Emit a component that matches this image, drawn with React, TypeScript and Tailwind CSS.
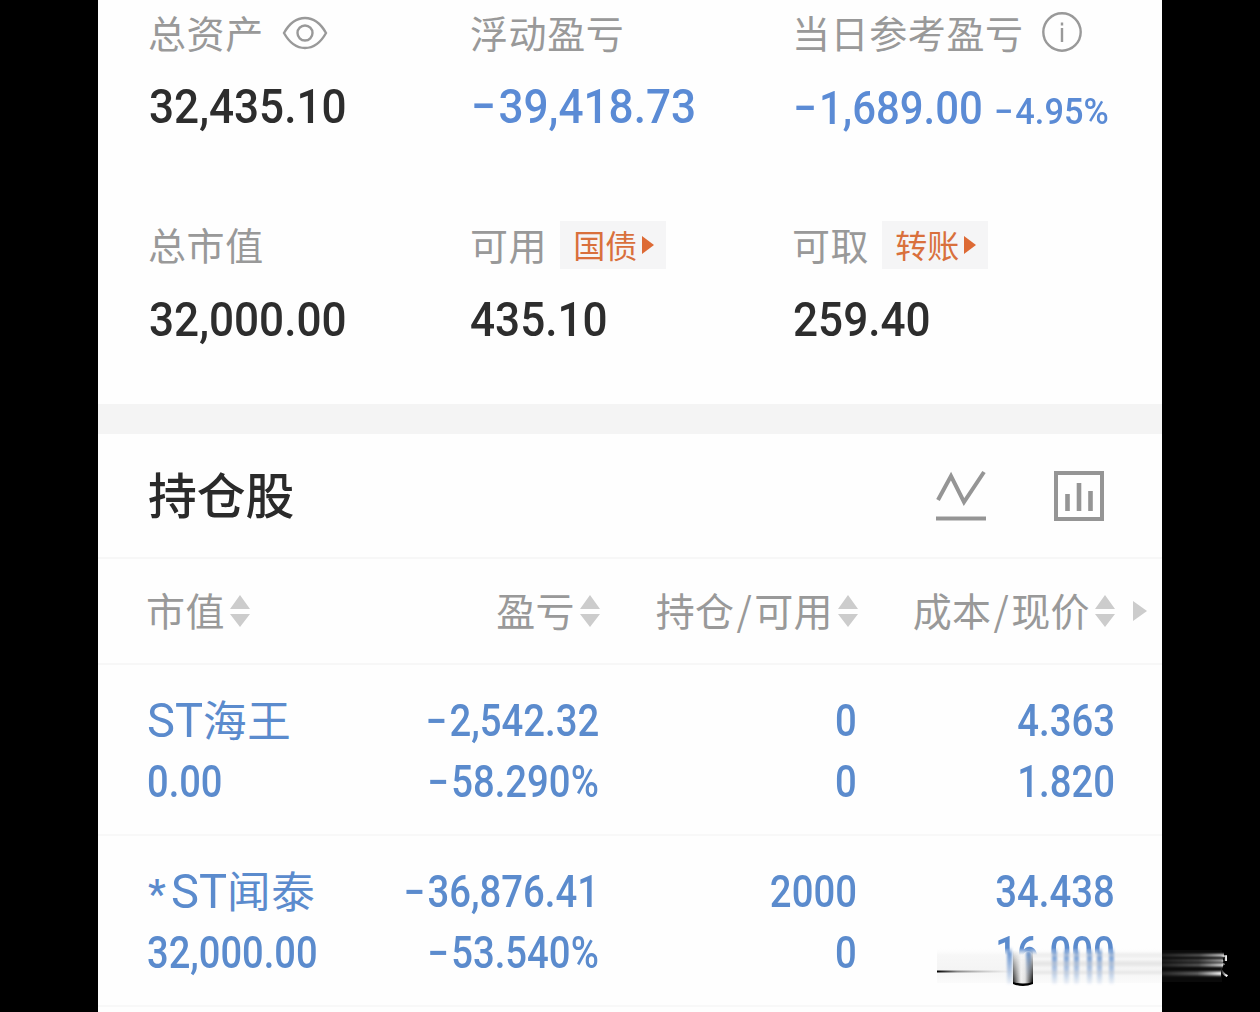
import { clsx } from 'clsx'

interface Holding {
  name: string
  starred?: boolean
  marketValue: string
  pnl: string
  pnlPercent: string
  position: string
  available: string
  cost: string
  price: string
}

const holdings: Holding[] = [
  {
    name: '海王',
    marketValue: '0.00',
    pnl: '−2,542.32',
    pnlPercent: '−58.290%',
    position: '0',
    available: '0',
    cost: '4.363',
    price: '1.820',
  },
  {
    name: '闻泰',
    starred: true,
    marketValue: '32,000.00',
    pnl: '−36,876.41',
    pnlPercent: '−53.540%',
    position: '2000',
    available: '0',
    cost: '34.438',
    price: '16.000',
  },
]

// Narrow digits, squeezed towards the side they are aligned to
function Num({ children, className }: { children: string; className?: string }) {
  const negative = children.startsWith('−')
  return (
    <span className={clsx("inline-block whitespace-nowrap font-['Roboto',sans-serif] font-medium", className)}>
      {negative && <span className="mr-[0.06em]">−</span>}
      {negative ? children.slice(1) : children}
    </span>
  )
}

function Label({ children }: { children: string }) {
  return <span className="-mt-[3px] -ml-px text-[38px] leading-none tracking-[0.6px] text-[#999]">{children}</span>
}

function Tag({ children }: { children: string }) {
  return (
    <span className="ml-[13px] flex h-12 w-[106px] items-center bg-[#f5f5f6] pl-[13px] text-[32px] leading-none text-[#d9703c]">
      <span className="-mt-[3px]">{children}</span>
      <svg viewBox="0 0 12 18" className="ml-[5px] h-[18px] w-3 fill-[#dd6a35]">
        <path d="M0 0L12 9L0 18Z" />
      </svg>
    </span>
  )
}

function EyeIcon() {
  return (
    <svg viewBox="0 0 46 34" className="ml-[18px] h-[34px] w-[46px] fill-none stroke-[#999] stroke-[2.4]">
      <path d="M2 17C7 8 14 2 23 2C32 2 39 8 44 17C39 26 32 32 23 32C14 32 7 26 2 17Z" />
      <circle cx="23" cy="17" r="7.5" />
    </svg>
  )
}

function InfoIcon() {
  return (
    <svg viewBox="0 0 42 42" className="-mt-[2px] ml-[17px] h-[42px] w-[42px] fill-none stroke-[#999] stroke-[2.4]">
      <circle cx="21" cy="21" r="18.7" />
      <path d="M21 17V31M21 11.5V14.5" />
    </svg>
  )
}

function SortIcon() {
  return (
    <svg viewBox="0 0 20 32" className="ml-[5px] h-8 w-5 shrink-0 fill-[#ccc]">
      <path d="M10 0L20 14H0ZM0 19H20L10 32Z" />
    </svg>
  )
}

function LineChartIcon() {
  return (
    <svg viewBox="0 0 50 52" className="h-[52px] w-[50px] fill-none stroke-[#959595] stroke-[4]">
      <path d="M2 30L15 6L28 32L48 2M0 48.5H50" />
    </svg>
  )
}

function BarChartIcon() {
  return (
    <svg viewBox="0 0 50 50" className="h-[50px] w-[50px] fill-none stroke-[#959595] stroke-[4]">
      <path d="M2 2H48V48H2Z" />
      <path d="M13.5 23V40M25 12V40M36.5 20V40" className="stroke-[4.6]" />
    </svg>
  )
}

function HeaderCell({ children, className }: { children: string; className?: string }) {
  const [first, second] = children.split('/')
  return (
    <div className={clsx('flex items-center text-[39px] leading-none text-[#999]', className)}>
      <span className="-mt-1 whitespace-nowrap tracking-[0.4px]">
        {first}
        {second && <span className="mx-[2px]">/</span>}
        {second}
      </span>
      <SortIcon />
    </div>
  )
}

function Pair({ top, bottom }: { top: string; bottom: string }) {
  return (
    <div className="flex flex-col items-end pt-[2px] text-[43.5px] leading-[61px]">
      <Num className="origin-right scale-x-[0.88]">{top}</Num>
      <Num className="origin-right scale-x-[0.88]">{bottom}</Num>
    </div>
  )
}

function HoldingRow({ item }: { item: Holding }) {
  return (
    <div className="grid h-[171px] grid-cols-[200px_252px_258px_258px] border-b-2 border-[#f8f8f8] pt-6 pl-[49px] text-[#5b8bcd]">
      <div className="flex flex-col items-start text-[43.5px] leading-[61px]">
        <div className="-mt-px flex h-[64px] items-center whitespace-nowrap">
          {item.starred && (
            <span className="w-[24px] translate-x-px translate-y-[3px] font-['Roboto',sans-serif] text-[40px] font-medium">
              *
            </span>
          )}
          <span className="w-[56px] origin-left scale-x-[0.98] font-['Roboto',sans-serif] text-[48px]">ST</span>
          <span className="-mt-[3px] tracking-[0.8px]">{item.name}</span>
        </div>
        <Num className="origin-left scale-x-[0.875]">{item.marketValue}</Num>
      </div>
      <Pair top={item.pnl} bottom={item.pnlPercent} />
      <Pair top={item.position} bottom={item.available} />
      <Pair top={item.cost} bottom={item.price} />
    </div>
  )
}

// Smeared strip in the lower right corner, running over the last price and the margin
function Smear() {
  return (
    <div className="absolute top-[935px] left-[930px] h-[60px] w-[305px]">
      <svg viewBox="930 935 305 60" className="h-full w-full">
        <defs>
          <linearGradient id="cover" x1="0" y1="0" x2="0" y2="1">
            <stop offset="0" stopColor="#fdfdfd" stopOpacity="0" />
            <stop offset="0.2" stopColor="#f7f7f7" />
            <stop offset="0.6" stopColor="#f4f4f4" />
            <stop offset="1" stopColor="#fbfbfb" />
          </linearGradient>
          <linearGradient id="stem" gradientUnits="userSpaceOnUse" x1="0" y1="947" x2="0" y2="984">
            <stop offset="0" stopColor="#5b8bcd" stopOpacity="0" />
            <stop offset="0.18" stopColor="#5b8bcd" stopOpacity="0.85" />
            <stop offset="1" stopColor="#5b8bcd" stopOpacity="0.08" />
          </linearGradient>
          <linearGradient id="cup" x1="0" y1="0" x2="1" y2="0">
            <stop offset="0" stopColor="#222" />
            <stop offset="0.4" stopColor="#eee" stopOpacity="0.9" />
            <stop offset="0.6" stopColor="#ddd" stopOpacity="0.9" />
            <stop offset="1" stopColor="#000" />
          </linearGradient>
          <linearGradient id="cupFade" x1="0" y1="0" x2="0" y2="1">
            <stop offset="0.05" stopColor="#fff" stopOpacity="0" />
            <stop offset="0.85" stopColor="#fff" />
          </linearGradient>
          <mask id="cupMask">
            <rect x="1010" y="948" width="28" height="40" fill="url(#cupFade)" />
          </mask>
          <linearGradient id="dark" x1="0" y1="0" x2="1" y2="0">
            <stop offset="0" stopColor="#000" />
            <stop offset="0.25" stopColor="#888" />
            <stop offset="1" stopColor="#ccc" stopOpacity="0" />
          </linearGradient>
          <linearGradient id="light" x1="0" y1="0" x2="1" y2="0">
            <stop offset="0" stopColor="#fff" stopOpacity="0.12" />
            <stop offset="0.6" stopColor="#fff" stopOpacity="0.35" />
            <stop offset="1" stopColor="#fff" />
          </linearGradient>
          <filter id="soften" x="-5%" y="-50%" width="110%" height="200%">
            <feGaussianBlur stdDeviation="0.4 0.9" />
          </filter>
          <filter id="soft" x="-5%" y="-5%" width="110%" height="110%">
            <feGaussianBlur stdDeviation="0.8" />
          </filter>
        </defs>
        <rect x="937" y="948" width="225" height="35" fill="url(#cover)" />
        <path
          d="M1007 947h5v37h-5zM1026 947h5v37h-5zM1052 947h5v37h-5zM1064 947h5v37h-5zM1074 947h5v37h-5zM1087 947h5v37h-5zM1097 947h5v37h-5zM1109 947h5v37h-5z"
          fill="url(#stem)"
          filter="url(#soft)"
        />
        <rect x="937" y="970.5" width="80" height="2" fill="url(#dark)" />
        <g opacity="0.35" filter="url(#soften)">
          <rect x="1033" y="953" width="129" height="4" fill="#ddd" />
          <rect x="1033" y="961" width="129" height="5" fill="#ccc" />
          <rect x="1033" y="971" width="129" height="3" fill="#ccc" />
        </g>
        <path d="M1013 948H1033V983Q1023 987 1013 983Z" fill="url(#cup)" mask="url(#cupMask)" />
        <path d="M1013 982Q1023 985 1033 982V984Q1023 988 1013 984Z" fill="#000" />
        <rect x="1162" y="950" width="60" height="32" fill="#fff" opacity="0.04" />
        <g filter="url(#soften)">
          <rect x="1162" y="954" width="62" height="2.5" fill="url(#light)" />
          <rect x="1162" y="959.5" width="61" height="2" fill="url(#light)" />
          <rect x="1162" y="963.5" width="61" height="3" fill="url(#light)" />
          <rect x="1162" y="971.5" width="59" height="4" fill="url(#light)" />
        </g>
      </svg>
      <span className="absolute top-[12px] right-[6px] mask-l-from-10% mask-l-to-30% text-[27px] leading-9 text-white">
        家
      </span>
    </div>
  )
}

export default function App() {
  return (
    <div className="relative h-[1012px] w-[1260px] overflow-hidden bg-black font-['Noto_Sans_CJK_SC',sans-serif]">
      <main className="mx-[98px] h-full overflow-hidden bg-[#fefefe]">
        <section className="grid h-[404px] grid-cols-[322px_322px_1fr] grid-rows-[66px_146px_66px_84px] items-center pl-[51px] text-[49px] leading-none text-[#2d2d2d]">
          <div className="flex items-center">
            <Label>总资产</Label>
            <EyeIcon />
          </div>
          <Label>浮动盈亏</Label>
          <div className="flex items-center">
            <Label>当日参考盈亏</Label>
            <InfoIcon />
          </div>

          <div className="flex h-20 self-start leading-[82px]">
            <Num className="origin-left scale-x-[0.9]">32,435.10</Num>
          </div>
          <div className="flex h-20 self-start leading-[82px] text-[#5b8bd5]">
            <Num className="origin-left scale-x-[0.9]">−39,418.73</Num>
          </div>
          <div className="flex h-20 self-start leading-[84px] text-[#5b8bd5]">
            <Num className="w-[201px] origin-left scale-x-[0.91] text-[46px]">−1,689.00</Num>
            <Num className="origin-left scale-x-[0.94] text-[36.5px] leading-[91px]">−4.95%</Num>
          </div>

          <div className="flex items-center pt-px">
            <Label>总市值</Label>
          </div>
          <div className="flex items-center">
            <Label>可用</Label>
            <Tag>国债</Tag>
          </div>
          <div className="flex items-center">
            <Label>可取</Label>
            <Tag>转账</Tag>
          </div>

          <div className="-mt-[2px] flex">
            <Num className="origin-left scale-x-[0.9]">32,000.00</Num>
          </div>
          <div className="-mt-[2px] -ml-px flex">
            <Num className="origin-left scale-x-[0.9]">435.10</Num>
          </div>
          <div className="-mt-[2px] flex">
            <Num className="origin-left scale-x-[0.9]">259.40</Num>
          </div>
        </section>

        <div className="h-[30px] bg-[#f4f4f4]" />

        <header className="flex h-[125px] items-center border-b-2 border-[#f7f7f7] pr-[58px] pl-[50px]">
          <h2 className="-mt-1 flex-1 text-[48.8px] leading-none font-medium text-[#2a2a2a]">持仓股</h2>
          <LineChartIcon />
          <div className="ml-[68px]">
            <BarChartIcon />
          </div>
        </header>

        <div className="flex h-[106px] items-center border-b-2 border-[#f7f7f7] pl-[48px]">
          <HeaderCell className="w-[201px]">市值</HeaderCell>
          <HeaderCell className="w-[253px] justify-end">盈亏</HeaderCell>
          <HeaderCell className="w-[258px] justify-end">持仓/可用</HeaderCell>
          <HeaderCell className="w-[257px] justify-end">成本/现价</HeaderCell>
          <svg viewBox="0 0 14 20" className="ml-[18px] h-5 w-[14px] fill-[#ccc]">
            <path d="M0 0L14 10L0 20Z" />
          </svg>
        </div>

        {holdings.map((item) => (
          <HoldingRow key={item.name} item={item} />
        ))}
      </main>
      <Smear />
    </div>
  )
}
